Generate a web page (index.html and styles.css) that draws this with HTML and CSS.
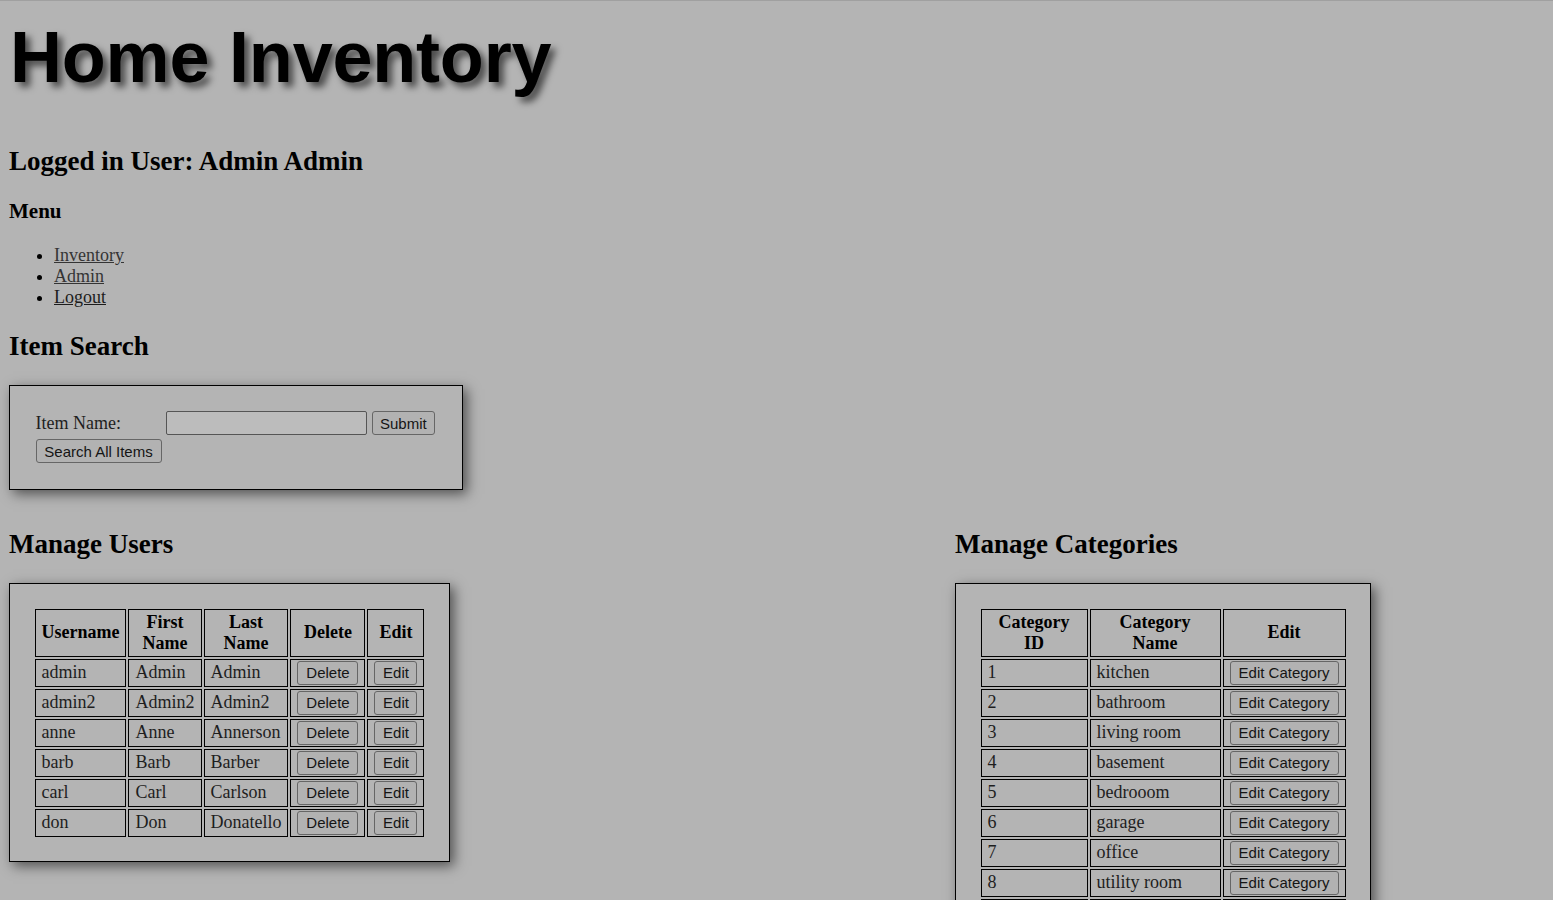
FILE: index.html
```html
<!DOCTYPE html>
<html lang="en">
<head>
<meta charset="utf-8">
<title>Home Inventory</title>
<link rel="stylesheet" href="styles.css">
</head>
<body>
  <h1 class="site-title">Home Inventory</h1>
  <h2 class="heading">Logged in User: Admin Admin</h2>
  <h3 class="subheading">Menu</h3>
  <ul class="menu">
    <li><a class="menu-link" href="#">Inventory</a></li>
    <li><a class="menu-link" href="#">Admin</a></li>
    <li><a class="menu-link menu-link-dark" href="#">Logout</a></li>
  </ul>

  <h2 class="heading">Item Search</h2>
  <form class="panel search-panel" action="#">
    <div class="search-grid">
      <label class="search-label" for="itemName">Item Name:</label>
      <div class="search-field">
        <input class="text-input" type="text" id="itemName" name="itemName">
        <button class="btn" type="button">Submit</button>
      </div>
      <div class="search-all">
        <button class="btn" type="button">Search All Items</button>
      </div>
    </div>
  </form>

  <div class="columns">
    <section class="column">
      <h2 class="heading">Manage Users</h2>
      <div class="panel table-panel">
        <table class="data-table">
          <thead>
            <tr>
              <th class="w-user">Username</th>
              <th class="w-first">First Name</th>
              <th class="w-last">Last Name</th>
              <th class="w-del">Delete</th>
              <th class="w-edit">Edit</th>
            </tr>
          </thead>
          <tbody>
            <tr><td>admin</td><td>Admin</td><td>Admin</td><td><button class="btn btn-cell" type="button">Delete</button></td><td><button class="btn btn-cell" type="button">Edit</button></td></tr>
            <tr><td>admin2</td><td>Admin2</td><td>Admin2</td><td><button class="btn btn-cell" type="button">Delete</button></td><td><button class="btn btn-cell" type="button">Edit</button></td></tr>
            <tr><td>anne</td><td>Anne</td><td>Annerson</td><td><button class="btn btn-cell" type="button">Delete</button></td><td><button class="btn btn-cell" type="button">Edit</button></td></tr>
            <tr><td>barb</td><td>Barb</td><td>Barber</td><td><button class="btn btn-cell" type="button">Delete</button></td><td><button class="btn btn-cell" type="button">Edit</button></td></tr>
            <tr><td>carl</td><td>Carl</td><td>Carlson</td><td><button class="btn btn-cell" type="button">Delete</button></td><td><button class="btn btn-cell" type="button">Edit</button></td></tr>
            <tr><td>don</td><td>Don</td><td>Donatello</td><td><button class="btn btn-cell" type="button">Delete</button></td><td><button class="btn btn-cell" type="button">Edit</button></td></tr>
          </tbody>
        </table>
      </div>
    </section>

    <section class="column">
      <h2 class="heading">Manage Categories</h2>
      <div class="panel table-panel">
        <table class="data-table">
          <thead>
            <tr>
              <th class="w-catid">Category ID</th>
              <th class="w-catname">Category Name</th>
              <th class="w-catedit">Edit</th>
            </tr>
          </thead>
          <tbody>
            <tr><td>1</td><td>kitchen</td><td><button class="btn btn-cell" type="button">Edit Category</button></td></tr>
            <tr><td>2</td><td>bathroom</td><td><button class="btn btn-cell" type="button">Edit Category</button></td></tr>
            <tr><td>3</td><td>living room</td><td><button class="btn btn-cell" type="button">Edit Category</button></td></tr>
            <tr><td>4</td><td>basement</td><td><button class="btn btn-cell" type="button">Edit Category</button></td></tr>
            <tr><td>5</td><td>bedrooom</td><td><button class="btn btn-cell" type="button">Edit Category</button></td></tr>
            <tr><td>6</td><td>garage</td><td><button class="btn btn-cell" type="button">Edit Category</button></td></tr>
            <tr><td>7</td><td>office</td><td><button class="btn btn-cell" type="button">Edit Category</button></td></tr>
            <tr><td>8</td><td>utility room</td><td><button class="btn btn-cell" type="button">Edit Category</button></td></tr>
            <tr><td>9</td><td>closet</td><td><button class="btn btn-cell" type="button">Edit Category</button></td></tr>
          </tbody>
        </table>
      </div>
    </section>
  </div>
</body>
</html>
```

FILE: styles.css
```css
html {
  background: #b4b4b4;
  border-top: 1px solid #a0a0a0;
}

body {
  margin: 0;
  padding: 0 9px 9px;
  font-family: "Liberation Serif", "Times New Roman", serif;
  font-size: 18px;
  color: #000;
}

.site-title {
  font-family: "Liberation Sans", Arial, sans-serif;
  font-size: 72px;
  font-weight: bold;
  line-height: normal;
  letter-spacing: -0.2px;
  margin: 15px 0 48px 1px;
  color: #000;
  text-shadow: 5px 5px 7px rgba(0, 0, 0, 0.6);
}

.heading {
  font-size: 27px;
  font-weight: bold;
  margin: 22.4px 0;
}

.subheading {
  font-size: 21px;
  font-weight: bold;
  margin: 21px 0;
}

.menu {
  margin: 18px 0;
  padding-left: 45px;
}

.menu-link {
  color: #343434;
  text-decoration: underline;
}

.menu-link-dark {
  color: #1c1c1c;
}

.panel {
  width: fit-content;
  border: 1px solid #000;
  padding: 22.5px;
  box-shadow: 4px 4px 12px rgba(0, 0, 0, 0.55);
}

.search-panel {
  margin: 23px 0 17px;
}

.search-grid {
  display: grid;
  grid-template-columns: 126px auto;
  column-gap: 4px;
  row-gap: 4px;
  padding: 3px 4px 3px 3px;
  align-items: center;
}

.search-label {
  color: #1e1e1e;
}

.search-field {
  display: flex;
  align-items: center;
  gap: 5px;
}

.text-input {
  box-sizing: border-box;
  width: 201px;
  height: 24px;
  margin: 0;
  border: 1px solid #555;
  border-radius: 2px;
  background: #bcbcbc;
}

.btn {
  box-sizing: border-box;
  height: 24px;
  margin: 0;
  padding: 0 7.5px;
  font-family: "Liberation Sans", Arial, sans-serif;
  font-size: 15px;
  color: #151515;
  background: #b2b2b2;
  border: 1px solid #666;
  border-radius: 3px;
}

.search-all {
  display: flex;
}

.search-all .btn {
  width: 126px;
}

.columns {
  display: grid;
  grid-template-columns: 946px 1fr;
}

.column .heading {
  margin-top: 22.4px;
}

.table-panel {
  margin-top: 23px;
}

.data-table {
  border-collapse: separate;
  border-spacing: 2px;
}

.data-table th,
.data-table td {
  border: 1px solid #000;
  padding: 1px 6px;
  font-size: 18px;
}

.data-table th {
  padding: 2px 6px;
  color: #000;
  font-weight: bold;
  text-align: center;
}

.data-table td {
  color: #1e1e1e;
  text-align: left;
  height: 24px;
}

.btn-cell {
  display: block;
  width: 100%;
}

.w-user { width: 77px; }
.w-first { width: 58px; }
.w-last { width: 69px; }
.w-del { width: 61px; }
.w-edit { width: 43px; }
.w-catid { width: 93px; }
.w-catname { width: 117px; }
.w-catedit { width: 109px; }
```
